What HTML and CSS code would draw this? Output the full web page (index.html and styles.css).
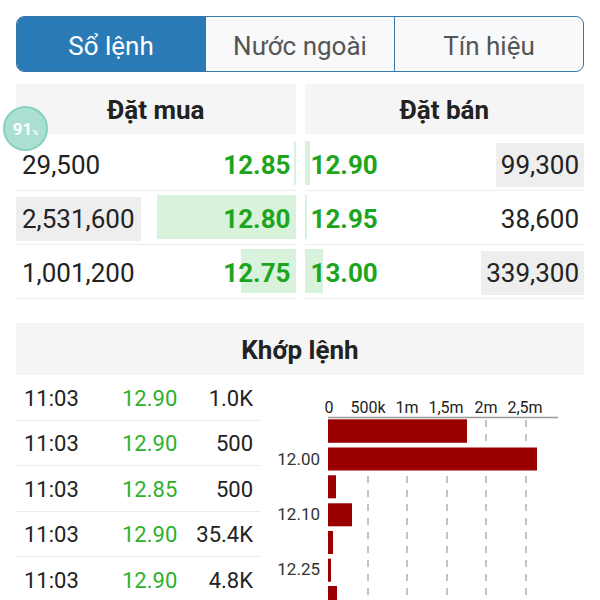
FILE: index.html
```html
<!DOCTYPE html>
<html lang="vi">
<head>
<meta charset="utf-8">
<link rel="stylesheet" href="styles.css">
</head>
<body>
<div class="app">
  <div class="tabs">
    <div class="tab active">Sổ lệnh</div>
    <div class="tab">Nước ngoài</div>
    <div class="tab">Tín hiệu</div>
  </div>

  <div class="book">
    <div class="side bid">
      <div class="head">Đặt mua</div>
      <div class="row"><span class="vol">29,500</span><i class="bar" style="width:2px"></i><span class="px">12.85</span></div>
      <div class="row"><span class="vol hl">2,531,600</span><i class="bar" style="width:139px"></i><span class="px">12.80</span></div>
      <div class="row"><span class="vol">1,001,200</span><i class="bar" style="width:55px"></i><span class="px">12.75</span></div>
    </div>
    <div class="side ask">
      <div class="head">Đặt bán</div>
      <div class="row"><i class="bar" style="width:5px"></i><span class="px">12.90</span><span class="vol hl">99,300</span></div>
      <div class="row"><i class="bar" style="width:2px"></i><span class="px">12.95</span><span class="vol">38,600</span></div>
      <div class="row"><i class="bar" style="width:18px"></i><span class="px">13.00</span><span class="vol hl">339,300</span></div>
    </div>
    <div class="badge"><span class="num">91</span><span class="pct">%</span></div>
  </div>

  <div class="match">
    <div class="head">Khớp lệnh</div>
    <div class="match-body">
      <div class="trades">
        <div class="trade"><span>11:03</span><span class="p">12.90</span><span class="v">1.0K</span></div>
        <div class="trade"><span>11:03</span><span class="p">12.90</span><span class="v">500</span></div>
        <div class="trade"><span>11:03</span><span class="p">12.85</span><span class="v">500</span></div>
        <div class="trade"><span>11:03</span><span class="p">12.90</span><span class="v">35.4K</span></div>
        <div class="trade"><span>11:03</span><span class="p">12.90</span><span class="v">4.8K</span></div>
      </div>
      <div class="chart">
        <svg class="chart-svg" width="340" height="225" viewBox="0 0 340 225">
          <g class="axis-labels">
            <text x="69" y="38">0</text>
            <text x="108" y="38">500k</text>
            <text x="147" y="38">1m</text>
            <text x="186" y="38">1,5m</text>
            <text x="226" y="38">2m</text>
            <text x="265" y="38">2,5m</text>
          </g>
          <line class="axis" x1="68" y1="42.5" x2="298" y2="42.5"/>
          <g class="grid">
            <line x1="108" y1="45" x2="108" y2="225"/>
            <line x1="147" y1="45" x2="147" y2="225"/>
            <line x1="187" y1="45" x2="187" y2="225"/>
            <line x1="226" y1="45" x2="226" y2="225"/>
            <line x1="266" y1="45" x2="266" y2="225"/>
          </g>
          <g class="bars">
            <rect x="68" y="44.3" width="139" height="23.5"/>
            <rect x="68" y="72.5" width="209" height="23"/>
            <rect x="68" y="100.3" width="8" height="23"/>
            <rect x="68" y="128.3" width="24" height="23"/>
            <rect x="68" y="156" width="5" height="23"/>
            <rect x="68" y="183.7" width="3" height="23"/>
            <rect x="68" y="211" width="9" height="23"/>
          </g>
          <g class="price-labels">
            <text x="60" y="90">12.00</text>
            <text x="60" y="145">12.10</text>
            <text x="60" y="200">12.25</text>
          </g>
        </svg>
      </div>
    </div>
  </div>
</div>
</body>
</html>
```
FILE: styles.css
```css
body {
  margin: 0;
  background: #ffffff;
  font-family: Roboto, "Noto Sans", "Liberation Sans", sans-serif;
  color: #222222;
  overflow: hidden;
}

.app {
  width: 568px;
  padding: 16px 16px 0;
}

/* Tabs */
.tabs {
  display: flex;
  height: 56px;
  box-sizing: border-box;
  border: 1.5px solid #3778a7;
  border-radius: 8px;
  overflow: hidden;
  background: #f8f9fa;
}

.tab {
  flex: 1;
  display: flex;
  align-items: center;
  justify-content: center;
  font-size: 26px;
  color: #555555;
  border-left: 1.5px solid #3778a7;
  padding-top: 3px;
}

.tab:first-child {
  border-left: 0;
}

.tab.active {
  background: #2a7ab6;
  color: #ffffff;
}

/* Order book */
.book {
  position: relative;
  display: grid;
  grid-template-columns: 1fr 1fr;
  column-gap: 9px;
  margin-top: 12px;
}

.head {
  height: 50px;
  background: #f5f5f5;
  display: flex;
  align-items: center;
  justify-content: center;
  font-weight: 700;
  font-size: 26px;
  color: #222222;
  margin-bottom: 3px;
  padding-top: 2px;
  box-sizing: border-box;
}

.row {
  position: relative;
  height: 54px;
  box-sizing: border-box;
  border-bottom: 1px solid #ececec;
  display: flex;
  align-items: center;
  justify-content: space-between;
  font-size: 26px;
  padding-top: 2px;
}

.vol {
  line-height: 44px;
  padding: 0 6px;
  color: #222222;
}

.ask .vol {
  padding: 0 5px;
}

.vol.hl {
  background: #eeeeee;
}

.bar {
  position: absolute;
  top: 4px;
  bottom: 5px;
  background: #d9f2db;
}

.bid .bar {
  right: 0;
}

.ask .bar {
  left: 0;
}

.px {
  position: relative;
  font-weight: 700;
  color: #1ea51e;
}

.bid .px {
  padding-right: 5px;
}

.ask .px {
  padding-left: 6px;
}

.badge {
  position: absolute;
  left: -13px;
  top: 22px;
  width: 45px;
  height: 45px;
  box-sizing: border-box;
  border-radius: 50%;
  background: #aadfd2;
  border: 2px solid #88d0c0;
  display: flex;
  align-items: center;
  justify-content: center;
  color: #ffffff;
  font-weight: 700;
}

.badge .num {
  font-size: 17px;
}

.badge .pct {
  font-size: 8px;
  margin-top: 7px;
}

/* Matched orders */
.match {
  margin-top: 24px;
}

.match .head {
  height: 52px;
  margin-bottom: 0;
}

.match-body {
  display: flex;
}

.trades {
  width: 244px;
  flex: none;
}

.trade {
  display: grid;
  grid-template-columns: 98px 1fr auto;
  align-items: center;
  height: 45.5px;
  box-sizing: border-box;
  border-bottom: 1px solid #ececec;
  padding: 2px 7px 0 8px;
  font-size: 22px;
  color: #222222;
}

.trade .p {
  color: #2db12d;
}

.chart {
  flex: 1;
}

.chart-svg {
  display: block;
  overflow: visible;
}

.axis-labels text {
  font-size: 16px;
  fill: #222222;
  text-anchor: middle;
}

.axis {
  stroke: #999999;
  stroke-width: 1.5;
}

.grid line {
  stroke: #888888;
  stroke-width: 1;
  stroke-dasharray: 7 7;
}

.bars rect {
  fill: #9a0000;
}

.price-labels text {
  font-size: 17px;
  fill: #333333;
  text-anchor: end;
}
```
